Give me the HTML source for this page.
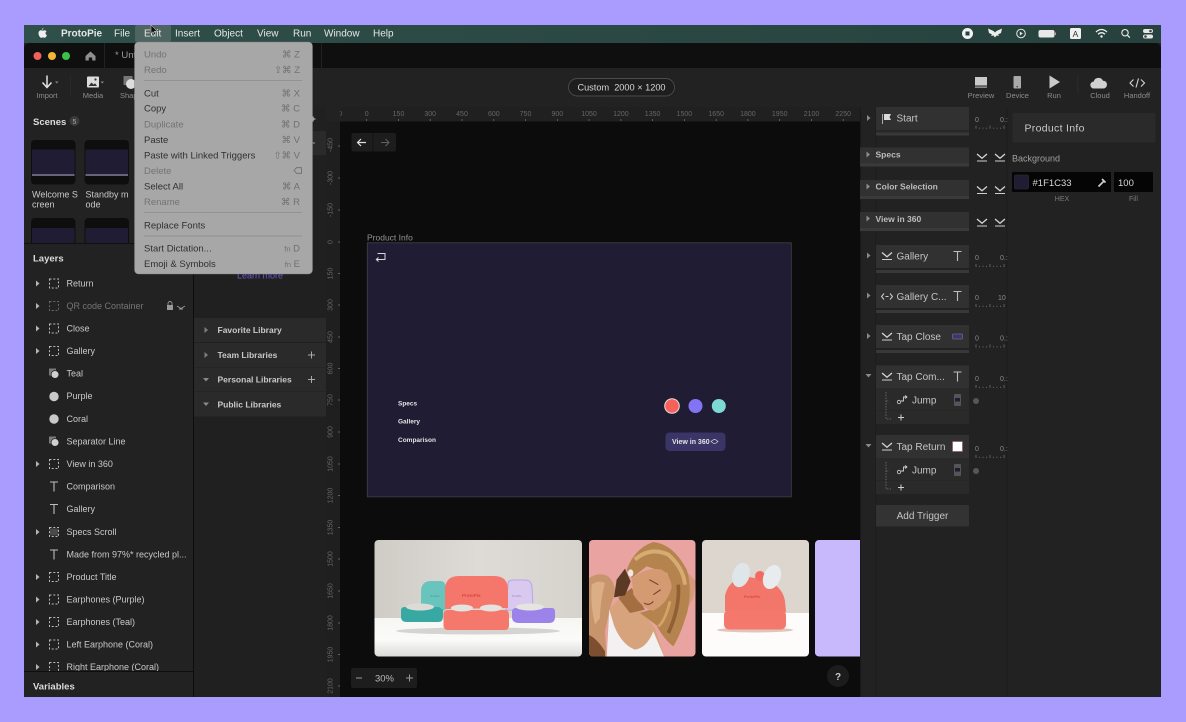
<!DOCTYPE html>
<html><head><meta charset="utf-8"><title>ProtoPie</title>
<style>
html,body{margin:0;padding:0;background:#aa9bff;width:1186px;height:722px;overflow:hidden}
svg{display:block;filter:blur(.35px)}
text{font-family:"Liberation Sans",sans-serif}
.l{font-size:9px;fill:#c9c9c9}
.h{font-size:9.5px;font-weight:bold;fill:#dcdcdc}
.m{font-size:10px;fill:#e6e6e6}
.mi{font-size:9.5px;fill:#303030}
.md{font-size:9.5px;fill:#737373}
.ms{font-size:9.5px;fill:#707070;text-anchor:end}
.t{font-size:7.5px;fill:#8c8c8c;text-anchor:middle}
.r{font-size:7px;fill:#666;text-anchor:middle}
.c{font-size:10px;fill:#c4c4c4}
.b{font-size:8.5px;font-weight:bold;fill:#c9c9c9}
.d{font-size:6.5px;font-weight:bold;fill:#e4e4e4}
.n{font-size:7px;fill:#8a8a8a}
</style></head><body>
<svg width="1186" height="722" viewBox="0 0 1186 722" xmlns="http://www.w3.org/2000/svg">
<defs>
<g id="fr"><rect x="-4.5" y="-4.5" width="9" height="9" fill="none" stroke="#bcbcbc" stroke-width="1" stroke-dasharray="2 1.8"/></g>
<path id="ar" d="M-1.5-3L2 0L-1.5 3Z" fill="#b5b5b5"/>
<path id="ad" d="M-3-1.5L3-1.5L0 2Z" fill="#8a8a8a"/>
<g id="tx"><path d="M-4-4.5H4M0-4.5V5" stroke="#bdbdbd" stroke-width="1.1" fill="none"/></g>
<g id="sh"><rect x="-5" y="-5" width="7" height="7" fill="#7a7a7a"/><circle cx="1" cy="1" r="3.9" fill="#d0d0d0" stroke="#222" stroke-width=".7"/></g>
<g id="tap"><path d="M-5-3.5L0 .8L5-3.5" fill="none" stroke="#d4d4d4" stroke-width="1.3"/><path d="M-5 3.5H5" stroke="#cfcfcf" stroke-width="1"/></g>
<g id="ruler"><path d="M0 0V3M3.5 1.8V3M7 1.8V3M10.5 1.8V3M14 0V3M17.5 1.8V3M21 1.8V3M24.5 1.8V3M28 0V3" stroke="#777" stroke-width=".7" fill="none"/></g>
<clipPath id="p1"><rect x="374.5" y="540" width="207.5" height="116.5" rx="4"/></clipPath>
<clipPath id="p2"><rect x="589" y="540" width="106.5" height="116.5" rx="4"/></clipPath>
<clipPath id="p3"><rect x="702" y="540" width="107" height="116.5" rx="4"/></clipPath>
<clipPath id="layers"><rect x="24" y="270" width="169" height="401"/></clipPath>
<clipPath id="scenes"><rect x="24" y="130" width="169" height="113"/></clipPath>
<linearGradient id="g1" x1="0" y1="0" x2="0" y2="1"><stop offset="0" stop-color="#f6f6f3"/><stop offset=".55" stop-color="#fbfbf9"/><stop offset="1" stop-color="#d9d9d7"/></linearGradient>
<linearGradient id="g2" x1="0" y1="0" x2="1" y2="0"><stop offset="0" stop-color="#cfccc6"/><stop offset=".5" stop-color="#dedbd7"/><stop offset="1" stop-color="#d6d3cd"/></linearGradient>
<linearGradient id="bar" x1="0" y1="0" x2="1" y2="0"><stop offset="0" stop-color="#2f4f4a"/><stop offset="1" stop-color="#27423e"/></linearGradient>
</defs>

<rect width="1186" height="722" fill="#aa9bff"/>
<!-- window -->
<rect x="24" y="25" width="1137" height="672" fill="#222"/>
<rect x="24" y="25" width="1137" height="18" fill="url(#bar)"/>
<path d="M24 49a6 6 0 0 1 6-6H1155a6 6 0 0 1 6 6V68H24Z" fill="#0f0f0f"/>
<rect x="24" y="68" width="1137" height="39" fill="#222"/>
<rect x="24" y="107" width="1137" height=".8" fill="#1b1b1b"/>

<!-- menu bar -->
<path d="M42 29.8c.8-.1 1.4-.8 1.4-1.7-.8.1-1.500.8-1.400 1.700zM38.500 33c0-1.800 1.400-2.800 2.700-2.800.7 0 1 .4 1.600.4s1-.4 1.800-.4c.8 0 1.600.5 2 1.200-1.600 1-1.300 3 .3 3.700-.4 1.100-1.300 2.700-2.200 2.700-.7 0-.9-.4-1.700-.4s-1.100.4-1.800.4c-1.200 0-2.700-2.400-2.700-4.800z" fill="#efefef"/>
<text x="61" y="36.500" class="m" style="font-weight:bold">ProtoPie</text>
<text x="114" y="36.500" class="m">File</text>
<rect x="135" y="25" width="36" height="17" rx="2" fill="#4d6460"/>
<text x="144" y="36.500" class="m">Edit</text>
<text x="175" y="36.500" class="m">Insert</text>
<text x="214" y="36.500" class="m">Object</text>
<text x="257" y="36.500" class="m">View</text>
<text x="293" y="36.500" class="m">Run</text>
<text x="324" y="36.500" class="m">Window</text>
<text x="373" y="36.500" class="m">Help</text>
<path d="M151 25l0 8.500 2-1.800 1.400 3 1.200-.6-1.300-2.900 2.700-.2Z" fill="#111" stroke="#ddd" stroke-width=".5"/>
<!-- status icons -->
<circle cx="967.500" cy="33.500" r="5.500" fill="#f1f1f1"/><rect x="965.500" y="31.500" width="4" height="4" fill="#27423e"/>
<path d="M988 28.500l5.500 2.500 1.500 1.500 1.500-1.500 5.500-2.500-1 4.500-3 1.500 1 1.500-2.500-.5-1.500 2-1.500-2-2.500.5 1-1.500-3-1.500Z" fill="#ececec"/>
<circle cx="1021" cy="33.500" r="4.300" fill="none" stroke="#e6e6e6" stroke-width="1"/><path d="M1019.800 31.500l3 2-3 2Z" fill="#e6e6e6"/>
<rect x="1038.500" y="30" width="16" height="7.500" rx="2" fill="#e8e8e8"/><rect x="1055" y="32.500" width="1" height="2.500" fill="#aaa"/>
<rect x="1070" y="28" width="11" height="11" rx="1.500" fill="#f0f0f0"/><text x="1075.500" y="36.800" text-anchor="middle" style="font-size:8.500px;fill:#333">A</text>
<path d="M1096 32q5.500-5 11 0M1098 34.200q3.500-3 7 0" fill="none" stroke="#f0f0f0" stroke-width="1.300"/><circle cx="1101.500" cy="36.500" r="1.200" fill="#f0f0f0"/>
<circle cx="1125" cy="32.700" r="3.200" fill="none" stroke="#eee" stroke-width="1.100"/><path d="M1127.300 35l2.500 2.700" stroke="#eee" stroke-width="1.200"/>
<rect x="1143" y="29" width="10" height="4" rx="2" fill="#e6e6e6"/><rect x="1143" y="34.500" width="10" height="4" rx="2" fill="#e6e6e6"/><circle cx="1150.500" cy="31" r="1.300" fill="#444"/><circle cx="1145.500" cy="36.500" r="1.300" fill="#444"/>

<!-- title bar -->
<circle cx="37.500" cy="56" r="4" fill="#f2605b"/><circle cx="52" cy="56" r="4" fill="#f6b33a"/><circle cx="66" cy="56" r="4" fill="#3bc14a"/>
<path d="M85.500 56l5-4.500 5 4.500v4.500h-3.300v-3h-3.400v3h-3.300Z" fill="#8f8f8f"/>
<rect x="104" y="43" width="1" height="25" fill="#222"/>
<text x="115" y="58" style="font-size:9.500px;fill:#9a9a9a">* Unt</text>
<rect x="321" y="43" width="1" height="25" fill="#222"/>

<!-- toolbar -->
<path d="M47 75.500V87M42.500 82.500L47 87.500l4.500-5" fill="none" stroke="#e2e2e2" stroke-width="1.500"/><path d="M55 81.500h3.500l-1.700 2Z" fill="#888"/>
<rect x="70" y="75" width=".8" height="20" fill="#2d2d2d"/>
<text x="47" y="98" class="t">Import</text>
<rect x="87" y="76.500" width="12" height="11" rx="1" fill="#dcdcdc"/><path d="M88.500 86l3-3.500 2 2 1.500-1.300 2 2.800Z" fill="#333"/><circle cx="95.500" cy="79.500" r="1.100" fill="#333"/><path d="M100.500 81.500h3.500l-1.700 2Z" fill="#888"/>
<text x="93" y="98" class="t">Media</text>
<rect x="123.500" y="76" width="9" height="9" fill="#777"/><circle cx="131" cy="84" r="5" fill="#ddd"/>
<text x="120" y="98" style="font-size:7.500px;fill:#8c8c8c">Shape</text>
<rect x="568.500" y="78.500" width="106" height="17.500" rx="8.700" fill="#1e1e1e" stroke="#4b4b4b" stroke-width=".9"/>
<text x="621.500" y="90.500" text-anchor="middle" style="font-size:9.200px;fill:#d6d6d6">Custom&#160; 2000 × 1200</text>
<rect x="975" y="77" width="12" height="8.500" fill="#c9c9c9"/><rect x="975" y="86.500" width="12" height="1.300" fill="#a0a0a0"/>
<text x="981" y="98" class="t">Preview</text>
<rect x="1013.500" y="76" width="7.500" height="12.500" rx="1" fill="#a9a9a9"/><rect x="1016.500" y="86" width="1.500" height="1.300" fill="#444"/>
<text x="1017.500" y="98" class="t">Device</text>
<path d="M1049.500 75.500v13l10.500-6.500Z" fill="#c9c9c9"/>
<text x="1054" y="98" class="t">Run</text>
<rect x="1077.500" y="76" width=".8" height="18" fill="#2d2d2d"/>
<path d="M1094 88.500a3.500 3.500 0 0 1-.3-7 5 5 0 0 1 9.300-.8 3.900 3.900 0 0 1 4 3.900 3.900 3.900 0 0 1-3.800 3.900Z" fill="#d0d0d0"/>
<text x="1100" y="98" class="t">Cloud</text>
<path d="M1133.500 79.500l-3.500 3.500 3.500 3.500M1141 79.500l3.500 3.500-3.500 3.500M1138.500 78.500l-2.500 9" fill="none" stroke="#d6d6d6" stroke-width="1.100"/>
<text x="1137" y="98" class="t">Handoff</text>

<!-- left panel -->
<rect x="24" y="107" width="169" height="590" fill="#222"/>
<rect x="193" y="107" width="1" height="590" fill="#0d0d0d"/>
<text x="33" y="125" class="h">Scenes</text>
<circle cx="74.500" cy="121" r="5" fill="#3b3b3b"/><text x="74.500" y="123.800" text-anchor="middle" style="font-size:7px;fill:#aaa">5</text>
<g clip-path="url(#scenes)">
<rect x="31" y="140" width="44.500" height="44.500" rx="4" fill="#0e0e0e"/><rect x="32" y="149.500" width="42.500" height="24.500" fill="#1f1c33"/><rect x="32" y="174" width="42.500" height="2" fill="#67647a"/>
<rect x="84.500" y="140" width="44.500" height="44.500" rx="4" fill="#0e0e0e"/><rect x="85.500" y="149.500" width="42.500" height="24.500" fill="#1f1c33"/><rect x="85.500" y="174" width="42.500" height="2" fill="#67647a"/>
<rect x="31" y="218" width="44.500" height="44.500" rx="4" fill="#0e0e0e"/><rect x="32" y="228" width="42.500" height="24.500" fill="#1f1c33"/>
<rect x="84.500" y="218" width="44.500" height="44.500" rx="4" fill="#0e0e0e"/><rect x="85.500" y="228" width="42.500" height="24.500" fill="#1f1c33"/>
</g>
<text x="32" y="197.500" class="l">Welcome S</text><text x="32" y="207.500" class="l">creen</text>
<text x="85.500" y="197.500" class="l">Standby m</text><text x="85.500" y="207.500" class="l">ode</text>
<rect x="24" y="243" width="169" height="1" fill="#111"/>
<text x="33" y="261.500" class="h">Layers</text>

<g clip-path="url(#layers)">
<use href="#ar" x="37.500" y="283.500"/><use href="#fr" x="54" y="283.500"/><text x="66.500" y="286.700" class="l">Return</text>
<use href="#ar" x="37.500" y="306"/><g opacity=".45"><use href="#fr" x="54" y="306"/></g><text x="66.500" y="309.200" class="l" style="fill:#757575">QR code Container</text>
<rect x="167" y="305" width="6" height="5" fill="#999"/><path d="M168 305v-1.500a2 2 0 0 1 4 0v1.500" fill="none" stroke="#999" stroke-width=".9"/><path d="M177 306l4 2.500 4-2.500M179 309h4" fill="none" stroke="#999" stroke-width=".9"/>
<use href="#ar" x="37.500" y="328.500"/><use href="#fr" x="54" y="328.500"/><text x="66.500" y="331.700" class="l">Close</text>
<use href="#ar" x="37.500" y="351"/><use href="#fr" x="54" y="351"/><text x="66.500" y="354.200" class="l">Gallery</text>
<use href="#sh" x="54" y="373.500"/><text x="66.500" y="376.700" class="l">Teal</text>
<circle cx="54" cy="396.500" r="4.700" fill="#c9c9c9"/><text x="66.500" y="399.200" class="l">Purple</text>
<circle cx="54" cy="419" r="4.700" fill="#c9c9c9"/><text x="66.500" y="422" class="l">Coral</text>
<use href="#sh" x="54" y="441.500"/><text x="66.500" y="444.700" class="l">Separator Line</text>
<use href="#ar" x="37.500" y="464"/><use href="#fr" x="54" y="464"/><text x="66.500" y="467.200" class="l">View in 360</text>
<use href="#tx" x="54" y="486.500"/><text x="66.500" y="489.700" class="l">Comparison</text>
<use href="#tx" x="54" y="509"/><text x="66.500" y="512.200" class="l">Gallery</text>
<use href="#ar" x="37.500" y="532"/><use href="#fr" x="54" y="532"/><rect x="50" y="528.500" width="8" height="7" fill="#666" opacity=".6"/><text x="66.500" y="535.200" class="l">Specs Scroll</text>
<use href="#tx" x="54" y="554.500"/><text x="66.500" y="557.700" class="l">Made from 97%* recycled pl...</text>
<use href="#ar" x="37.500" y="577"/><use href="#fr" x="54" y="577"/><text x="66.500" y="580.200" class="l">Product Title</text>
<use href="#ar" x="37.500" y="599.500"/><use href="#fr" x="54" y="599.500"/><text x="66.500" y="602.700" class="l">Earphones (Purple)</text>
<use href="#ar" x="37.500" y="622"/><use href="#fr" x="54" y="622"/><text x="66.500" y="625.200" class="l">Earphones (Teal)</text>
<use href="#ar" x="37.500" y="644.500"/><use href="#fr" x="54" y="644.500"/><text x="66.500" y="647.700" class="l">Left Earphone (Coral)</text>
<use href="#ar" x="37.500" y="667"/><use href="#fr" x="54" y="667"/><text x="66.500" y="670.200" class="l">Right Earphone (Coral)</text>
</g>
<rect x="24" y="671" width="169" height="1" fill="#0e0e0e"/>
<text x="33" y="689.500" class="h">Variables</text>

<!-- library panel -->
<rect x="194" y="107" width="132" height="590" fill="#202020"/>
<rect x="194" y="131" width="132" height="24" fill="#2a2a2a"/>
<path d="M313 116.500v5M310.500 119h5" stroke="#cfcfcf" stroke-width="1"/>
<path d="M311 143h4" stroke="#999" stroke-width="1"/>
<text x="237" y="278.500" style="font-size:9px;fill:#6a5acd">Learn more</text>
<rect x="194" y="318" width="132" height="24" fill="#2a2a2a"/>
<rect x="194" y="343" width="132" height="24" fill="#2a2a2a"/>
<rect x="194" y="367.500" width="132" height="24" fill="#2a2a2a"/>
<rect x="194" y="392" width="132" height="24.500" fill="#2a2a2a"/>
<use href="#ar" x="206" y="330" opacity=".6"/><text x="217.500" y="333.200" class="b">Favorite Library</text>
<use href="#ar" x="206" y="355" opacity=".6"/><text x="217.500" y="358" class="b">Team Libraries</text><path d="M308 355h7M311.500 351.500v7" stroke="#aaa" stroke-width="1"/>
<use href="#ad" x="206" y="379.500"/><text x="217.500" y="382.700" class="b">Personal Libraries</text><path d="M308 379.500h7M311.500 376v7" stroke="#aaa" stroke-width="1"/>
<use href="#ad" x="206" y="404"/><text x="217.500" y="407.500" class="b">Public Libraries</text>

<!-- canvas -->
<rect x="340" y="121" width="520" height="576" fill="#0c0c0c"/>
<rect x="326" y="107" width="534" height="14.500" fill="#202020"/>
<g id="rh">
<text x="335" y="116" class="r">-150</text><text x="366.700" y="116" class="r">0</text><text x="398.500" y="116" class="r">150</text><text x="430.200" y="116" class="r">300</text><text x="462" y="116" class="r">450</text><text x="493.800" y="116" class="r">600</text><text x="525.500" y="116" class="r">750</text><text x="557.300" y="116" class="r">900</text><text x="589" y="116" class="r">1050</text><text x="620.900" y="116" class="r">1200</text><text x="652.600" y="116" class="r">1350</text><text x="684.400" y="116" class="r">1500</text><text x="716.200" y="116" class="r">1650</text><text x="747.900" y="116" class="r">1800</text><text x="779.700" y="116" class="r">1950</text><text x="811.500" y="116" class="r">2100</text><text x="843.200" y="116" class="r">2250</text>
<path d="M366.700 119v2M398.500 119v2M430.200 119v2M462 119v2M493.800 119v2M525.500 119v2M557.300 119v2M589 119v2M620.900 119v2M652.600 119v2M684.400 119v2M716.200 119v2M747.900 119v2M779.700 119v2M811.500 119v2M843.200 119v2" stroke="#777" stroke-width=".7"/>
</g>
<rect x="326" y="107" width="14" height="14.500" fill="#222"/>
<rect x="326" y="121.500" width="14" height="575.500" fill="#1f1f1f"/>
<g>
<text transform="translate(332.500 145) rotate(-90)" class="r">-450</text><text transform="translate(332.500 178) rotate(-90)" class="r">-300</text><text transform="translate(332.500 210) rotate(-90)" class="r">-150</text><text transform="translate(332.500 242) rotate(-90)" class="r">0</text><text transform="translate(332.500 273.500) rotate(-90)" class="r">150</text>
<text transform="translate(332.500 305) rotate(-90)" class="r">300</text><text transform="translate(332.500 337) rotate(-90)" class="r">450</text><text transform="translate(332.500 368.500) rotate(-90)" class="r">600</text><text transform="translate(332.500 400) rotate(-90)" class="r">750</text><text transform="translate(332.500 432) rotate(-90)" class="r">900</text><text transform="translate(332.500 464) rotate(-90)" class="r">1050</text><text transform="translate(332.500 495.500) rotate(-90)" class="r">1200</text><text transform="translate(332.500 527.500) rotate(-90)" class="r">1350</text><text transform="translate(332.500 559) rotate(-90)" class="r">1500</text><text transform="translate(332.500 591) rotate(-90)" class="r">1650</text><text transform="translate(332.500 623) rotate(-90)" class="r">1800</text><text transform="translate(332.500 654.500) rotate(-90)" class="r">1950</text><text transform="translate(332.500 686) rotate(-90)" class="r">2100</text>
<path d="M338 146h2M338 178h2M338 210h2M338 242h2M338 273.500h2M338 305h2M338 337h2M338 368.500h2M338 400h2M338 432h2M338 464h2M338 495.500h2M338 527.500h2M338 559h2M338 591h2M338 623h2M338 654.500h2M338 686h2" stroke="#777" stroke-width=".7"/>
</g>
<rect x="351.500" y="133" width="44.500" height="18.500" rx="2" fill="#1d1d1d"/><rect x="372.500" y="133" width=".8" height="18.500" fill="#111"/>
<path d="M366 142.500h-8M361 139l-3.500 3.500 3.500 3.500" fill="none" stroke="#e0e0e0" stroke-width="1.200"/>
<path d="M381 142.500h8M385.500 139l3.500 3.500-3.500 3.500" fill="none" stroke="#616161" stroke-width="1"/>

<text x="367" y="240.500" style="font-size:8.500px;fill:#929292">Product Info</text>
<rect x="367.300" y="242.800" width="424" height="254" fill="#1f1c33" stroke="#3d3c44" stroke-width=".9"/>
<path d="M377.500 253.500H385V259.500H376M378.500 257.500l-2.200 2 2.200 2" fill="none" stroke="#d8d8d8" stroke-width="1"/>
<text x="398" y="405.500" class="d">Specs</text>
<text x="398" y="423.500" class="d">Gallery</text>
<text x="398" y="441.800" class="d">Comparison</text>
<circle cx="672" cy="406" r="7.300" fill="#f9605a" stroke="#e4dede" stroke-width="1"/>
<circle cx="695.500" cy="406" r="7" fill="#8374f4"/>
<circle cx="718.800" cy="406" r="7" fill="#7dd9d3"/>
<rect x="665.500" y="432.500" width="60" height="18.500" rx="4" fill="#3a3566"/>
<text x="672" y="444" class="d" style="font-size:7px">View in 360</text>
<path d="M713 440l-2 1.500 2 1.500M716 440l2 1.500-2 1.500M713 440q1.500-1 3 0M713 443q1.500 1 3 0" fill="none" stroke="#ddd" stroke-width=".7"/>

<!-- photo 1 -->
<g clip-path="url(#p1)">
<rect x="374" y="540" width="208" height="80" fill="url(#g2)"/>
<rect x="374" y="618" width="208" height="39" fill="url(#g1)"/>
<ellipse cx="478" cy="631" rx="82" ry="3.500" fill="#bdbab6" opacity=".6"/>
<path d="M421 608V590q1-9 10-9h9q6 0 6 8v20l-4 3Z" fill="#68c4bd"/>
<path d="M401 610q0-3 4-3l34 0 4 3v7q0 5-5 5H407q-6 0-6-5Z" fill="#37a8a2"/>
<ellipse cx="420" cy="607" rx="14" ry="3.500" fill="#dcdcd6"/>
<path d="M506 610L508 584q0-4 5-4h12q7 0 7 8l1 18-4 5Z" fill="#d9c9ef" stroke="#b9a6e8" stroke-width="1"/>
<path d="M512 612q0-4 4-4h36q3 0 3 4v5q0 6-6 6H519q-7 0-7-6Z" fill="#9c83ea"/>
<ellipse cx="530" cy="607" rx="14" ry="3.500" fill="#e6e4e0"/>
<path d="M445 609V590q0-14 14-14h35q14 0 14 14v18Z" fill="#f5766a"/>
<rect x="443.500" y="610" width="65.500" height="20" rx="4" fill="#f5786c"/>
<ellipse cx="462" cy="608" rx="11" ry="3.500" fill="#e5e3df"/><ellipse cx="491" cy="608" rx="11" ry="3.500" fill="#e5e3df"/>
<text x="462" y="597" style="font-size:4.500px;font-weight:bold;fill:#d9473f">ProtoPie</text>
<text x="430" y="597" style="font-size:2.500px;fill:#3f9c97">ProtoPie</text>
<text x="512" y="597" style="font-size:2.500px;fill:#9a86d0">ProtoPie</text>
</g>

<!-- photo 2 -->
<g clip-path="url(#p2)">
<rect x="589" y="540" width="107" height="117" fill="#e9a4a2"/>
<g transform="translate(590 538) scale(.3333)">
<path d="M285 95L318 130L310 180L290 215Z" fill="#d69a7b"/>
<path d="M-5 122Q25 100 55 115Q75 135 75 165L60 210L45 280L50 360H-5Z" fill="#c8946b"/>
<path d="M5 140Q25 125 45 135Q30 190 30 240L15 260Q0 200 5 140Z" fill="#dcae86"/>
<path d="M-5 290Q20 300 45 340V360H-5Z" fill="#7d4f30"/>
<path d="M60 210L100 170L150 210L195 270L225 360H50Z" fill="#d7a37c"/>
<path d="M85 180L125 150L165 215L120 225Z" fill="#a56d42"/>
<path d="M58 215L72 262Q95 320 135 335Q170 330 190 280L224 360H50L55 270Z" fill="#f3f0f1"/>
<path d="M80 125L105 92L122 130L105 172L72 178Z" fill="#5a3a22"/>
<path d="M110 95Q135 30 190 12Q250 18 290 95Q308 150 292 222Q272 290 250 325Q222 305 200 262L150 225L210 205L245 150L232 105L170 85L125 120Z" fill="#b5844e"/>
<path d="M135 65Q180 25 235 50Q280 90 285 140" fill="none" stroke="#d6ac72" stroke-width="12"/>
<path d="M265 140Q270 210 235 285" fill="none" stroke="#8f6033" stroke-width="11"/>
<path d="M240 190Q225 250 205 265" fill="none" stroke="#d3a568" stroke-width="8"/>
<path d="M125 122Q170 85 215 95Q240 110 245 145Q235 195 190 218Q160 215 130 170Z" fill="#d49a72"/>
<path d="M178 125L205 140M190 170L212 155M162 195Q178 205 190 190" fill="none" stroke="#6a3f2a" stroke-width="3"/>
<ellipse cx="122" cy="105" rx="8" ry="11" fill="#efe7e2"/>
</g>
</g>

<!-- photo 3 -->
<g clip-path="url(#p3)">
<rect x="702" y="540" width="107" height="75" fill="#dcd6ce"/>
<rect x="702" y="613" width="107" height="44" fill="#fdfcfa"/>
<ellipse cx="755" cy="630" rx="38" ry="2.500" fill="#e2c4be"/>
<path d="M725 611v-15q2-11 12-17l12-2 11 2q22 4 25 22l1 11Z" fill="#f3766b"/>
<circle cx="760" cy="576" r="5" fill="#f26a60"/>
<rect x="724" y="610" width="62" height="19.500" rx="5" fill="#f5786c"/>
<ellipse cx="741" cy="575" rx="8.500" ry="12.500" transform="rotate(18 741 575)" fill="#dfe6ea"/>
<ellipse cx="772" cy="577" rx="8.500" ry="12.500" transform="rotate(22 772 577)" fill="#e8ecee"/>
<text x="744" y="598" style="font-size:4px;font-weight:bold;fill:#d9473f">ProtoPie</text>
</g>
<!-- photo 4 -->
<path d="M860 540H819a4 4 0 0 0-4 4V652a4 4 0 0 0 4 4.500H860Z" fill="#c8b9fd"/>

<rect x="351" y="668" width="66" height="20" rx="2" fill="#1d1d1d"/>
<path d="M356 678h6" stroke="#9a9a9a" stroke-width="1"/><path d="M406 678h7M409.500 674.500v7" stroke="#9a9a9a" stroke-width="1"/>
<text x="384.500" y="681.500" text-anchor="middle" style="font-size:9.500px;fill:#bdbdbd">30%</text>
<circle cx="838" cy="676" r="11" fill="#1c1c1c"/><text x="838" y="679.800" text-anchor="middle" style="font-size:10px;font-weight:bold;fill:#ccc">?</text>

<!-- triggers -->
<rect x="860" y="107" width="147" height="590" fill="#222"/>
<rect x="860" y="107" width=".9" height="590" fill="#1a1a1a"/>
<rect x="875.500" y="107" width=".7" height="590" fill="#1a1a1a"/>
<rect x="1007" y="107" width="154" height="590" fill="#222"/>
<rect x="1006.500" y="107" width=".8" height="590" fill="#1a1a1a"/>

<use href="#ar" x="868.500" y="118" opacity=".7"/>
<rect x="876" y="107" width="93" height="23" fill="#313131"/><rect x="876" y="130" width="93" height="2.500" fill="#272727"/><rect x="876" y="132.500" width="93" height="3" fill="#383838"/>
<path d="M882.500 114v10" stroke="#c9c9c9" stroke-width=".8"/><path d="M884 114h7l-1.500 3 1.500 3h-7Z" fill="#dcdcdc"/>
<text x="896.500" y="121.500" class="c">Start</text>
<g class="tl"><text x="975" y="122.200" class="n">0</text><text x="1000" y="122.200" class="n">0.:</text><use href="#ruler" x="976" y="125.800"/></g>

<rect x="860" y="147.500" width="109" height="16" fill="#313131"/><rect x="860" y="163.500" width="109" height="3" fill="#3a3a3a"/>
<use href="#ar" x="868" y="154.500" opacity=".7"/><text x="875.500" y="157.500" class="b" style="fill:#bdbdbd">Specs</text>
<rect x="860" y="180" width="109" height="16" fill="#313131"/><rect x="860" y="196" width="109" height="3" fill="#3a3a3a"/>
<use href="#ar" x="868" y="186.500" opacity=".7"/><text x="875.500" y="189.500" class="b" style="fill:#bdbdbd">Color Selection</text>
<rect x="860" y="212" width="109" height="16" fill="#313131"/><rect x="860" y="228" width="109" height="3" fill="#3a3a3a"/>
<use href="#ar" x="868" y="218.500" opacity=".7"/><text x="875.500" y="222" class="b" style="fill:#bdbdbd">View in 360</text>
<use href="#tap" x="982" y="157.500"/><use href="#tap" x="1000" y="157.500"/>
<use href="#tap" x="982" y="190"/><use href="#tap" x="1000" y="190"/>
<use href="#tap" x="982" y="222.500"/><use href="#tap" x="1000" y="222.500"/>

<use href="#ar" x="868.500" y="255.500" opacity=".7"/>
<rect x="876" y="245" width="93" height="23" fill="#313131"/><rect x="876" y="270" width="93" height="3" fill="#383838"/>
<use href="#tap" x="887" y="256"/><text x="896.500" y="259.500" class="c">Gallery</text><use href="#tx" x="957.500" y="256"/>
<text x="975" y="260" class="n">0</text><text x="1000" y="260" class="n">0.:</text><use href="#ruler" x="976" y="264"/>

<use href="#ar" x="868.500" y="295.500" opacity=".7"/>
<rect x="876" y="285" width="93" height="23" fill="#313131"/><rect x="876" y="310" width="93" height="3" fill="#383838"/>
<path d="M884 293.500l-2.500 3 2.500 3M890 293.500l2.500 3-2.500 3M885.500 296.500h3" fill="none" stroke="#cfcfcf" stroke-width="1"/>
<text x="896.500" y="300" class="c">Gallery C...</text><use href="#tx" x="957.500" y="296"/>
<text x="975" y="300" class="n">0</text><text x="998" y="300" class="n">10</text><use href="#ruler" x="976" y="304"/>

<use href="#ar" x="868.500" y="336" opacity=".7"/>
<rect x="876" y="325" width="93" height="23" fill="#313131"/><rect x="876" y="350" width="93" height="3" fill="#383838"/>
<use href="#tap" x="887" y="336.500"/><text x="896.500" y="340" class="c">Tap Close</text>
<rect x="952.500" y="334" width="10" height="5" rx="1" fill="#3b3670" stroke="#7d5f74" stroke-width=".8"/>
<text x="975" y="340.500" class="n">0</text><text x="1000" y="340.500" class="n">0.:</text><use href="#ruler" x="976" y="344.500"/>

<use href="#ad" x="868.500" y="375.500"/>
<rect x="876" y="365.500" width="93" height="22.500" fill="#313131"/><rect x="876" y="388" width="93" height="22.500" fill="#2a2a2a"/><rect x="876" y="411" width="93" height="13" fill="#2a2a2a"/>
<use href="#tap" x="887" y="376.500"/><text x="896.500" y="380" class="c">Tap Com...</text><use href="#tx" x="957.500" y="376.500"/>
<text x="975" y="381" class="n">0</text><text x="1000" y="381" class="n">0.:</text><use href="#ruler" x="976" y="385"/>
<path d="M886 392v27h5M886 401h3" fill="none" stroke="#777" stroke-width=".8" stroke-dasharray="1.500 1.300"/>
<circle cx="899" cy="402" r="1.700" fill="none" stroke="#cfcfcf" stroke-width=".8"/><path d="M901 401h2.500v-4h3M905 395.500l2 1.500-2 1.500" fill="none" stroke="#cfcfcf" stroke-width=".9"/>
<text x="912" y="403.500" class="c">Jump</text>
<rect x="954" y="394" width="7" height="12" rx="1" fill="#555"/><rect x="955" y="398" width="5" height="3.500" fill="#1f1c33"/>
<circle cx="976" cy="401" r="3" fill="#575757"/>
<path d="M898 417.500h6M901 414.500v6" stroke="#d0d0d0" stroke-width="1"/>

<use href="#ad" x="868.500" y="445.500"/>
<rect x="876" y="435" width="93" height="23" fill="#313131"/><rect x="876" y="458" width="93" height="22.500" fill="#2a2a2a"/><rect x="876" y="481" width="93" height="13" fill="#2a2a2a"/>
<use href="#tap" x="887" y="446.500"/><text x="896.500" y="450" class="c">Tap Return</text>
<rect x="952.500" y="441.500" width="10" height="10" fill="#fff" stroke="#8d5a5a" stroke-width=".7"/>
<text x="975" y="451" class="n">0</text><text x="1000" y="451" class="n">0.:</text><use href="#ruler" x="976" y="455"/>
<path d="M886 462v27h5M886 471h3" fill="none" stroke="#777" stroke-width=".8" stroke-dasharray="1.500 1.300"/>
<circle cx="899" cy="472" r="1.700" fill="none" stroke="#cfcfcf" stroke-width=".8"/><path d="M901 471h2.500v-4h3M905 465.500l2 1.500-2 1.500" fill="none" stroke="#cfcfcf" stroke-width=".9"/>
<text x="912" y="473.500" class="c">Jump</text>
<rect x="954" y="464" width="7" height="12" rx="1" fill="#555"/><rect x="955" y="468" width="5" height="3.500" fill="#1f1c33"/>
<circle cx="976" cy="471" r="3" fill="#575757"/>
<path d="M898 487.500h6M901 484.500v6" stroke="#d0d0d0" stroke-width="1"/>

<rect x="876" y="505" width="93" height="21.500" rx="1" fill="#333"/>
<text x="922.500" y="519" text-anchor="middle" class="c">Add Trigger</text>

<!-- properties -->
<rect x="1012.500" y="113" width="143" height="29.500" rx="2" fill="#2a2a2a"/>
<text x="1024.500" y="131.500" style="font-size:10.500px;fill:#c9c9c9;letter-spacing:.3px">Product Info</text>
<text x="1012" y="161.500" style="font-size:9px;fill:#a0a0a0">Background</text>
<rect x="1012" y="172" width="99" height="20" rx="1" fill="#050505"/>
<rect x="1014.500" y="175" width="14" height="14" rx="1.500" fill="#1f1c33" stroke="#333" stroke-width=".6"/>
<text x="1032.500" y="185.800" style="font-size:9.500px;fill:#d8d8d8">#1F1C33</text>
<path d="M1098.500 186.500l5-5M1102 179l3.500 3.500" stroke="#d0d0d0" stroke-width="1.600"/>
<rect x="1114" y="172" width="39" height="20" rx="1" fill="#050505"/>
<text x="1118" y="185.800" style="font-size:9.500px;fill:#d8d8d8">100</text>
<text x="1062" y="201" text-anchor="middle" style="font-size:7px;fill:#7a7a7a">HEX</text>
<text x="1133.500" y="201" text-anchor="middle" style="font-size:7px;fill:#7a7a7a">Fill</text>

<!-- Edit menu -->
<rect x="134.500" y="42" width="178" height="232" rx="4" fill="#a7a7a7" stroke="#7d7d7d" stroke-width=".4"/>
<text x="144" y="57.500" class="md">Undo</text><text x="300" y="57.500" class="ms">⌘ Z</text>
<text x="144" y="73" class="md">Redo</text><text x="300" y="73" class="ms">⇧⌘ Z</text>
<rect x="144" y="80" width="158" height="1" fill="#929292"/>
<text x="144" y="96.500" class="mi">Cut</text><text x="300" y="96.500" class="ms">⌘ X</text>
<text x="144" y="111.500" class="mi">Copy</text><text x="300" y="111.500" class="ms">⌘ C</text>
<text x="144" y="127.500" class="md">Duplicate</text><text x="300" y="127.500" class="ms">⌘ D</text>
<text x="144" y="143" class="mi">Paste</text><text x="300" y="143" class="ms">⌘ V</text>
<text x="144" y="158.500" class="mi">Paste with Linked Triggers</text><text x="300" y="158.500" class="ms">⇧⌘ V</text>
<text x="144" y="174" class="md">Delete</text><path d="M294 170.500l2.500-2.800h5v5.600h-5Z" fill="none" stroke="#6c6c6c" stroke-width=".8"/>
<text x="144" y="189.500" class="mi">Select All</text><text x="300" y="189.500" class="ms">⌘ A</text>
<text x="144" y="205" class="md">Rename</text><text x="300" y="205" class="ms">⌘ R</text>
<rect x="144" y="212" width="158" height="1" fill="#929292"/>
<text x="144" y="228.500" class="mi">Replace Fonts</text>
<rect x="144" y="235.500" width="158" height="1" fill="#929292"/>
<text x="144" y="251.500" class="mi">Start Dictation...</text><text x="300" y="251.500" class="ms"><tspan style="font-size:7.500px">fn</tspan> D</text>
<text x="144" y="267" class="mi">Emoji &amp; Symbols</text><text x="300" y="267" class="ms"><tspan style="font-size:7.500px">fn</tspan> E</text>
</svg>
</body></html>
